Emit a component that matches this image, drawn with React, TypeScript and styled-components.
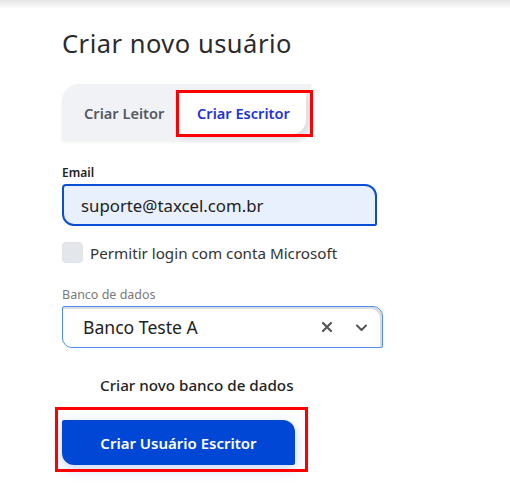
import React, { useState } from "react";
import styled, { createGlobalStyle } from "styled-components";

const GlobalStyle = createGlobalStyle`
  html, body {
    margin: 0;
    padding: 0;
    background: #ffffff;
    font-family: "Noto Sans", "Open Sans", Arial, sans-serif;
  }
`;

const Page = styled.div`
  position: relative;
  width: 510px;
  height: 485px;
  overflow: hidden;
  background: #fff;

  &::before {
    content: "";
    position: absolute;
    top: 0;
    left: 0;
    right: 0;
    height: 9px;
    background: linear-gradient(#e4e4e4, rgba(255, 255, 255, 0));
  }
`;

const Content = styled.div`
  display: flex;
  flex-direction: column;
  align-items: flex-start;
  padding: 26px 0 0 62px;
`;

const Title = styled.h1`
  margin: 0;
  font-size: 25.5px;
  font-weight: 400;
  color: #2b2b2b;
  letter-spacing: 0.5px;
  line-height: 34px;
`;

const Marked = styled.div`
  position: relative;
  display: inline-flex;
`;

const RedBox = styled.div<{ $t: number; $l: number; $r: number; $b: number }>`
  position: absolute;
  top: ${(p) => p.$t}px;
  left: ${(p) => p.$l}px;
  right: ${(p) => p.$r}px;
  bottom: ${(p) => p.$b}px;
  border: 3px solid #ff0000;
  pointer-events: none;
`;

const Tabs = styled.div`
  display: flex;
  align-items: center;
  width: 249px;
  height: 57px;
  box-sizing: border-box;
  padding: 8px 5px 7px 0;
  background: #f1f2f6;
  border-radius: 18px 0 16px 0;
  box-shadow: 0 1px 3px rgba(0, 0, 0, 0.08);
`;

const TabsWrap = styled(Marked)`
  margin-top: 24px;
`;

const Tab = styled.button<{ $active?: boolean }>`
  height: 42px;
  border: none;
  font-family: inherit;
  font-size: 14.6px;
  font-weight: 600;
  cursor: pointer;
  padding: 0 0 0 ${(p) => (p.$active ? "19px" : "22px")};
  width: ${(p) => (p.$active ? "128px" : "116px")};
  text-align: left;
  white-space: nowrap;
  color: ${(p) => (p.$active ? "#1c35d4" : "#555a60")};
  background: ${(p) => (p.$active ? "#ffffff" : "transparent")};
  border-radius: ${(p) => (p.$active ? "2px 2px 14px 2px" : "0")};
  box-shadow: ${(p) =>
    p.$active ? "2px 3px 8px rgba(0, 0, 0, 0.12)" : "none"};
`;

const Field = styled.div<{ $mt: number }>`
  margin-top: ${(p) => p.$mt}px;
  display: flex;
  flex-direction: column;
`;

const Label = styled.label<{ $muted?: boolean }>`
  font-size: ${(p) => (p.$muted ? "12.5px" : "12px")};
  line-height: 16px;
  font-weight: ${(p) => (p.$muted ? 400 : 600)};
  color: ${(p) => (p.$muted ? "#7a7a7a" : "#222")};
  margin-bottom: 3px;
`;

const EmailInput = styled.input`
  width: 315px;
  height: 42px;
  box-sizing: border-box;
  padding: 0 17px;
  font-family: inherit;
  font-size: 16.8px;
  color: #222;
  background: #e8effd;
  border: 2px solid #0b4ed6;
  border-radius: 4px 12px 2px 12px;
  outline: none;
`;

const CheckRow = styled.label`
  margin-top: 16px;
  display: flex;
  align-items: center;
  gap: 7px;
  font-size: 15.2px;
  color: #333;
  cursor: pointer;
`;

const Box = styled.span`
  width: 21px;
  height: 21px;
  border-radius: 4px;
  background: #e3e6ea;
  border: 1px solid #dfe2e6;
  box-sizing: border-box;
`;

const Select = styled.div`
  width: 321px;
  height: 42px;
  box-sizing: border-box;
  display: flex;
  align-items: center;
  padding: 0 14px 0 20px;
  background: #fff;
  border: 1px solid #4c8ff0;
  border-radius: 2px 10px 2px 10px;
  box-shadow: inset -2px 2px 0 #dcdcdc;
`;

const SelectValue = styled.span`
  flex: 1;
  font-size: 17.6px;
  color: #222;
`;

const IconBtn = styled.span<{ $ml: number }>`
  display: flex;
  align-items: center;
  justify-content: center;
  color: #555;
  margin-left: ${(p) => p.$ml}px;
`;

const LinkText = styled.div`
  margin: 27px 0 0 38px;
  font-size: 15.2px;
  font-weight: 500;
  color: #222;
`;

const ButtonWrap = styled(Marked)`
  margin-top: 25px;
`;

const Primary = styled.button`
  width: 233px;
  height: 45px;
  border: none;
  font-family: inherit;
  font-size: 15px;
  font-weight: 600;
  color: #fff;
  background: #0047d6;
  border-radius: 2px 12px 2px 12px;
  box-shadow: 0 4px 14px rgba(40, 90, 230, 0.25);
  cursor: pointer;
`;

export default function App() {
  const [tab, setTab] = useState("escritor");
  const [email, setEmail] = useState("suporte@taxcel.com.br");

  return (
    <>
      <GlobalStyle />
      <Page>
        <Content>
          <Title>Criar novo usuário</Title>

          <TabsWrap>
            <Tabs>
              <Tab $active={tab === "leitor"} onClick={() => setTab("leitor")}>
                Criar Leitor
              </Tab>
              <Tab
                $active={tab === "escritor"}
                onClick={() => setTab("escritor")}
              >
                Criar Escritor
              </Tab>
            </Tabs>
            <RedBox $t={6} $l={114} $r={-2} $b={4} />
          </TabsWrap>

          <Field $mt={24}>
            <Label>Email</Label>
            <EmailInput
              value={email}
              onChange={(e) => setEmail(e.target.value)}
            />
          </Field>

          <CheckRow>
            <Box />
            Permitir login com conta Microsoft
          </CheckRow>

          <Field $mt={24}>
            <Label $muted>Banco de dados</Label>
            <Select>
              <SelectValue>Banco Teste A</SelectValue>
              <IconBtn $ml={0}>
                <svg width="12" height="12" viewBox="0 0 12 12">
                  <path
                    d="M2 2 L10 10 M10 2 L2 10"
                    stroke="currentColor"
                    strokeWidth="2.2"
                    strokeLinecap="round"
                  />
                </svg>
              </IconBtn>
              <IconBtn $ml={22}>
                <svg width="13" height="13" viewBox="0 0 13 13">
                  <path
                    d="M2 4.5 L6.5 9 L11 4.5"
                    stroke="currentColor"
                    strokeWidth="2"
                    fill="none"
                    strokeLinecap="round"
                    strokeLinejoin="round"
                  />
                </svg>
              </IconBtn>
            </Select>
          </Field>

          <LinkText>Criar novo banco de dados</LinkText>

          <ButtonWrap>
            <Primary>Criar Usuário Escritor</Primary>
            <RedBox $t={-13} $l={-7} $r={-13} $b={-7} />
          </ButtonWrap>
        </Content>
      </Page>
    </>
  );
}
